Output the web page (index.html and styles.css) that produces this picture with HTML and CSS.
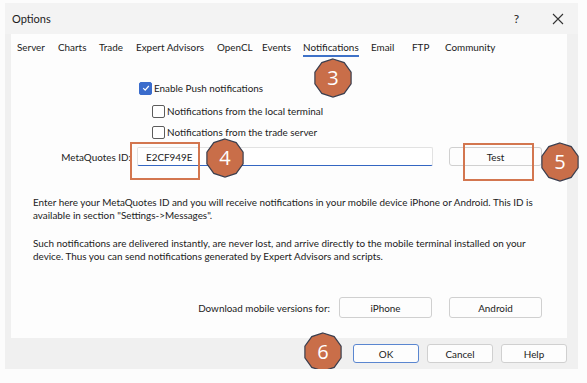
FILE: index.html
```html
<!DOCTYPE html>
<html lang="en">
<head>
    <meta charset="UTF-8">
    <meta name="viewport" content="width=device-width, initial-scale=1.0">
    <title>Options</title>
    <link rel="stylesheet" href="styles.css">
</head>
<body>
    <div class="window">
        <div class="title-bar">
            <span class="title">Options</span>
            <span class="help-btn">?</span>
            <span class="close-btn">
                <svg width="12" height="12" viewBox="0 0 12 12"><path d="M1 1 L11 11 M11 1 L1 11" stroke="#333" stroke-width="1.1"/></svg>
            </span>
        </div>

        <div class="panel">
            <div class="tabs">
                <span class="tab">Server</span>
                <span class="tab">Charts</span>
                <span class="tab">Trade</span>
                <span class="tab">Expert Advisors</span>
                <span class="tab">OpenCL</span>
                <span class="tab">Events</span>
                <span class="tab active">Notifications</span>
                <span class="tab">Email</span>
                <span class="tab">FTP</span>
                <span class="tab">Community</span>
            </div>

            <div class="options">
                <label class="check check-main"><span class="box checked"><svg width="10" height="10" viewBox="0 0 10 10"><path d="M2.2 5.2 L4.2 7.2 L7.8 3" fill="none" stroke="#fff" stroke-width="1.2"/></svg></span>Enable Push notifications</label>
                <label class="check check-sub"><span class="box"></span>Notifications from the local terminal</label>
                <label class="check check-sub"><span class="box"></span>Notifications from the trade server</label>
            </div>

            <div class="id-row">
                <span class="id-label">MetaQuotes ID:</span>
                <div class="id-input">E2CF949E</div>
                <button class="btn btn-test">Test</button>
            </div>

            <p class="note">Enter here your MetaQuotes ID and you will receive notifications in your mobile device iPhone or Android. This ID is available in section "Settings-&gt;Messages".</p>
            <p class="note">Such notifications are delivered instantly, are never lost, and arrive directly to the mobile terminal installed on your device. Thus you can send notifications generated by Expert Advisors and scripts.</p>

            <div class="download-row">
                <span>Download mobile versions for:</span>
                <button class="btn btn-wide">iPhone</button>
                <button class="btn btn-wide">Android</button>
            </div>
        </div>

        <div class="footer">
            <button class="btn btn-footer btn-default">OK</button>
            <button class="btn btn-footer">Cancel</button>
            <button class="btn btn-footer">Help</button>
        </div>

        <!-- tutorial annotations -->
        <div class="mark mark-id"></div>
        <div class="mark mark-test"></div>
        <svg class="badge badge-3" width="40" height="40" viewBox="0 0 40 40"><polygon points="20,1 31.2,4.6 38.1,14.1 38.1,25.9 31.2,35.4 20,39 8.8,35.4 1.9,25.9 1.9,14.1 8.8,4.6" /><text x="20" y="27">3</text></svg>
        <svg class="badge badge-4" width="40" height="40" viewBox="0 0 40 40"><polygon points="20,1 31.2,4.6 38.1,14.1 38.1,25.9 31.2,35.4 20,39 8.8,35.4 1.9,25.9 1.9,14.1 8.8,4.6" /><text x="20" y="27">4</text></svg>
        <svg class="badge badge-5" width="40" height="40" viewBox="0 0 40 40"><polygon points="20,1 31.2,4.6 38.1,14.1 38.1,25.9 31.2,35.4 20,39 8.8,35.4 1.9,25.9 1.9,14.1 8.8,4.6" /><text x="20" y="27">5</text></svg>
        <svg class="badge badge-6" width="40" height="40" viewBox="0 0 40 40"><polygon points="20,1 31.2,4.6 38.1,14.1 38.1,25.9 31.2,35.4 20,39 8.8,35.4 1.9,25.9 1.9,14.1 8.8,4.6" /><text x="20" y="27">6</text></svg>
    </div>
</body>
</html>
```

FILE: styles.css
```css
body {
    font-family: 'Lato', sans-serif;
    font-size: 9.9px;
    color: #1b1b1b;
    background-color: #fcfcfc;
    margin: 0;
    padding: 0;
}
.window {
    position: relative;
    width: 573px;
    height: 366px;
    margin: 3px 0 0 5px;
    background-color: #f0f0f0;
    display: flex;
    flex-direction: column;
}
.title-bar {
    height: 31px;
    display: flex;
    align-items: center;
    background-color: #f3f3f3;
    padding: 0 0 0 7px;
}
.title {
    font-size: 11px;
    flex: 1;
}
.help-btn {
    font-size: 12px;
    width: 41px;
    text-align: center;
}
.close-btn {
    width: 41px;
    display: flex;
    justify-content: center;
}
.panel {
    background-color: #fdfdfd;
    margin: 0 11px 0 6px;
    height: 304px;
    display: flex;
    flex-direction: column;
}
.tabs {
    display: grid;
    grid-template-columns: 41px 41px 37px 81px 45px 41px 68px 41px 33px auto;
    justify-items: start;
    height: 26px;
    align-items: center;
    padding-left: 6px;
}
.tab {
    position: relative;
    white-space: nowrap;
}
.tab.active::after {
    content: "";
    position: absolute;
    left: 0;
    right: 0;
    bottom: -4px;
    height: 2px;
    background-color: #3f72c8;
}
.options {
    display: flex;
    flex-direction: column;
    padding-top: 22px;
}
.check {
    display: flex;
    align-items: center;
    height: 12px;
    gap: 2px;
}
.check-main {
    padding-left: 128px;
}
.check-sub {
    padding-left: 141px;
    margin-top: 11px;
}
.check-sub + .check-sub {
    margin-top: 9px;
}
.box {
    width: 11px;
    height: 11px;
    border: 1px solid #5c5c5c;
    border-radius: 2px;
    display: flex;
    align-items: center;
    justify-content: center;
    background-color: #fff;
}
.box.checked {
    background-color: #3a6ccc;
    border-color: #3a6ccc;
}
.id-row {
    display: flex;
    align-items: center;
    margin-top: 9px;
    height: 19px;
}
.id-label {
    width: 120px;
    text-align: right;
}
.id-input {
    box-sizing: border-box;
    width: 296px;
    height: 19px;
    margin-left: 6px;
    padding: 3px 8px 0;
    border: 1px solid #e2e2e2;
    border-bottom: 1px solid #3466c2;
    border-radius: 2px;
    background-color: #fff;
}
.btn {
    font-family: 'Lato', sans-serif;
    font-size: 9.9px;
    color: #1b1b1b;
    background-color: #fdfdfd;
    border: 1px solid #d0d0d0;
    border-radius: 3px;
    padding: 0;
}
.btn-test {
    width: 93px;
    height: 19px;
    margin-left: 16px;
}
.note {
    margin: 0;
    padding: 0 16px 0 22px;
    line-height: 13px;
}
.id-row + .note {
    margin-top: 30px;
}
.note + .note {
    margin-top: 15px;
}
.download-row {
    display: flex;
    align-items: center;
    justify-content: flex-end;
    margin-top: 34px;
    padding-right: 25px;
}
.btn-wide {
    width: 93px;
    height: 21px;
}
.download-row span {
    margin-right: 9px;
}
.download-row .btn + .btn {
    margin-left: 17px;
}
.footer {
    flex: 1;
    display: flex;
    align-items: center;
    justify-content: flex-end;
    gap: 8px;
    padding-right: 11px;
}
.btn-footer {
    width: 66px;
    height: 19px;
}
.btn-default {
    border-color: #5a86d0;
}
.mark {
    position: absolute;
    border: 2px solid #d3764f;
    box-sizing: border-box;
}
.mark-id {
    left: 125px;
    top: 139px;
    width: 70px;
    height: 38px;
}
.mark-test {
    left: 458px;
    top: 140px;
    width: 71px;
    height: 38px;
}
.badge {
    position: absolute;
}
.badge polygon {
    fill: #c96e49;
    stroke: #3b3f4f;
    stroke-width: 1.2;
}
.badge text {
    font-family: 'Open Sans', sans-serif;
    font-size: 20px;
    fill: #fff;
    text-anchor: middle;
}
.badge-3 { left: 308px; top: 55px; }
.badge-4 { left: 200px; top: 135px; }
.badge-5 { left: 535px; top: 139px; }
.badge-6 { left: 298px; top: 329px; }
```
